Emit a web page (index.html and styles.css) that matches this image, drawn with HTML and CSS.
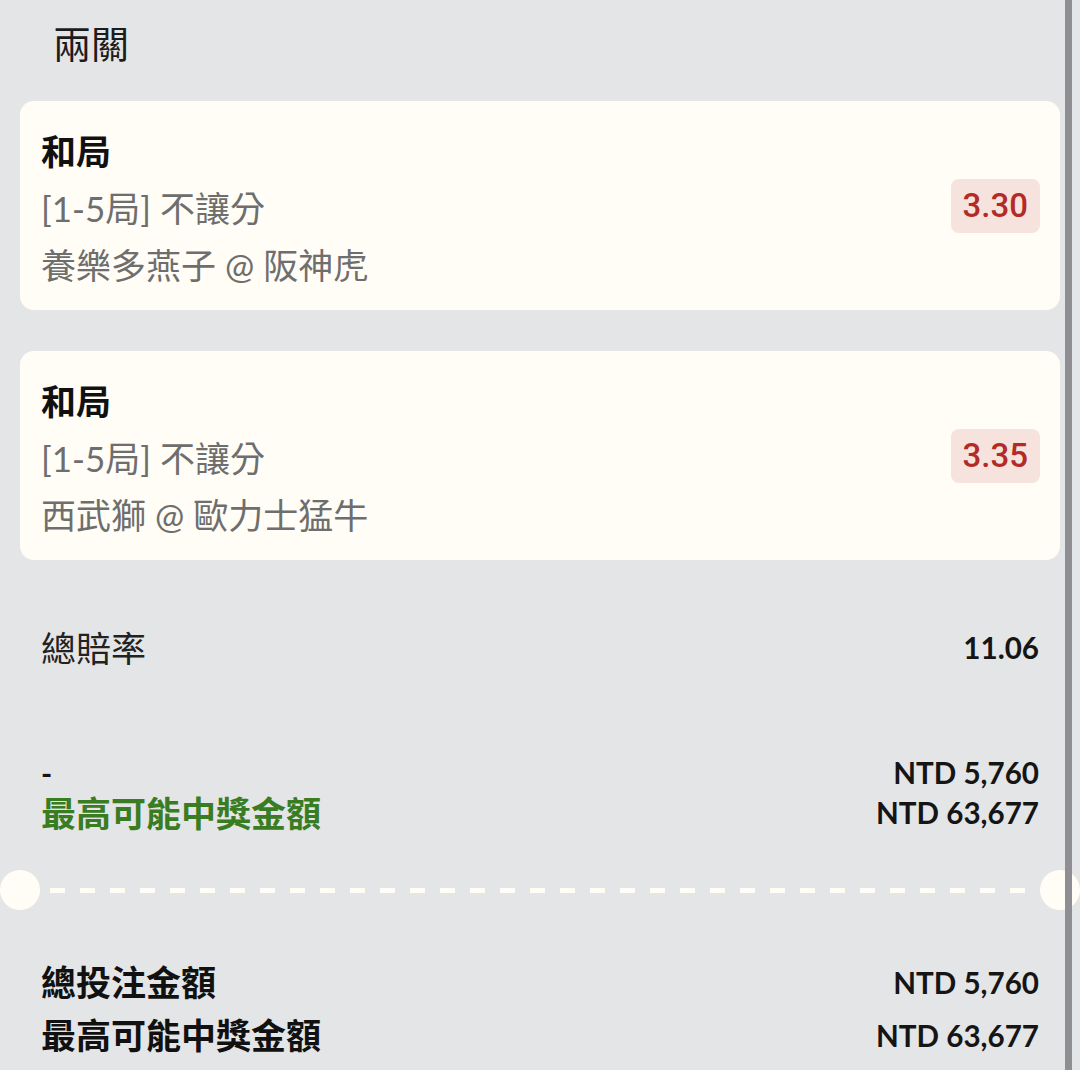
FILE: index.html
```html
<!DOCTYPE html>
<html lang="zh-Hant">
<head>
<meta charset="utf-8">
<link rel="stylesheet" href="styles.css">
</head>
<body>
<div class="page">
  <div class="title">兩關</div>

  <div class="card">
    <div class="info">
      <div class="pick">和局</div>
      <div class="sub">[1-5局] 不讓分</div>
      <div class="sub">養樂多燕子 @ 阪神虎</div>
    </div>
    <div class="odds">3.30</div>
  </div>

  <div class="card card-second">
    <div class="info">
      <div class="pick">和局</div>
      <div class="sub">[1-5局] 不讓分</div>
      <div class="sub">西武獅 @ 歐力士猛牛</div>
    </div>
    <div class="odds">3.35</div>
  </div>

  <div class="summary">
    <div class="row row-total-odds">
      <span class="label-light">總賠率</span>
      <span class="num">11.06</span>
    </div>
    <div class="block-stake">
      <div class="row row-tight">
        <span class="dash-label">-</span>
        <span class="num">NTD 5,760</span>
      </div>
      <div class="row row-tight">
        <span class="label-green">最高可能中獎金額</span>
        <span class="num">NTD 63,677</span>
      </div>
    </div>
  </div>

  <div class="separator">
    <span class="hole"></span>
    <span class="dashes"></span>
    <span class="hole"></span>
  </div>

  <div class="summary totals">
    <div class="row row-final">
      <span class="label-bold">總投注金額</span>
      <span class="num">NTD 5,760</span>
    </div>
    <div class="row row-final">
      <span class="label-bold">最高可能中獎金額</span>
      <span class="num">NTD 63,677</span>
    </div>
  </div>
</div>
<div class="scrollbar"></div>
</body>
</html>
```

FILE: styles.css
```css
html, body {
  margin: 0;
  padding: 0;
}
body {
  width: 1080px;
  height: 1070px;
  overflow: hidden;
  background: #e4e5e7;
  font-family: Lato, "Noto Sans CJK TC", "Noto Sans", sans-serif;
  color: #1b1b1b;
  position: relative;
}
.page {
  padding: 0 20px;
}
.title {
  padding: 18px 0 0 33px;
  line-height: 50px;
  margin-bottom: 33px;
  font-size: 38px;
  font-weight: 400;
  color: #1c1c1c;
}
.card {
  background: #fffdf5;
  border-radius: 14px;
  padding: 22px 20px 16px 21px;
  display: flex;
  align-items: center;
  justify-content: space-between;
}
.card-second {
  margin-top: 41px;
}
.info {
  display: flex;
  flex-direction: column;
}
.pick {
  font-size: 35px;
  line-height: 57px;
  font-weight: 700;
  color: #111;
}
.sub {
  font-size: 35px;
  line-height: 57px;
  color: #6e6e6e;
}
.odds {
  background: #f6e3dd;
  color: #b42a26;
  font-family: Roboto, "Noto Sans", sans-serif;
  font-weight: 500;
  font-size: 33px;
  line-height: 54px;
  padding: 0 12px;
  border-radius: 8px;
  margin-top: -6px;
}
.summary {
  padding: 0 21px;
}
.row {
  display: flex;
  justify-content: space-between;
  align-items: center;
}
.row-total-odds {
  margin-top: 63px;
  line-height: 50px;
}
.label-light {
  font-size: 35px;
  color: #222;
}
.num {
  font-size: 29.6px;
  font-weight: 700;
  color: #151515;
}
.block-stake {
  margin-top: 80px;
}
.row-tight {
  line-height: 40px;
}
.dash-label {
  font-size: 30px;
  font-weight: 700;
  color: #151515;
}
.label-green {
  font-size: 35px;
  font-weight: 700;
  color: #3a7c22;
}
.separator {
  margin: 37px -20px 0;
  height: 40px;
  display: flex;
  align-items: center;
}
.hole {
  width: 40px;
  height: 40px;
  border-radius: 50%;
  background: #fffdf5;
  flex: none;
}
.dashes {
  flex: 1;
  height: 5px;
  margin: 0 10px;
  background: repeating-linear-gradient(to right, #fffdf5 0 15px, transparent 15px 30px);
}
.totals {
  margin-top: 46px;
}
.row-final {
  line-height: 53px;
}
.label-bold {
  font-size: 35px;
  font-weight: 700;
  color: #111;
}
.scrollbar {
  position: absolute;
  top: 0;
  left: 1065px;
  width: 7px;
  height: 1070px;
  background: #8e8e93;
}
```
